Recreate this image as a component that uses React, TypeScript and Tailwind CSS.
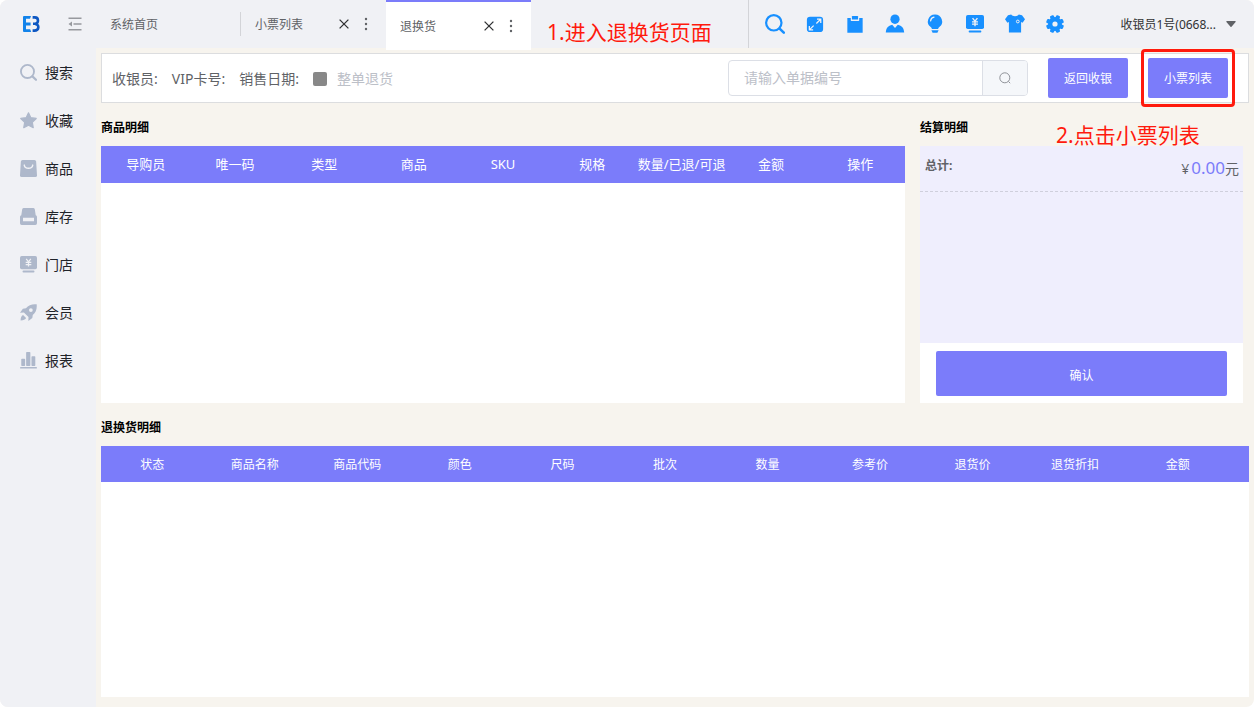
import type { ReactNode } from "react";

type IconProps = { className?: string };

function Svg({ className, children }: { className?: string; children: ReactNode }) {
  return (
    <svg viewBox="0 0 20 20" className={className} fill="currentColor" aria-hidden="true">
      {children}
    </svg>
  );
}

const SearchIcon = ({ className }: IconProps) => (
  <Svg className={className}>
    <circle cx="8.8" cy="8.8" r="7.7" fill="none" stroke="currentColor" strokeWidth="2.2" />
    <path d="M14.6 14.6 18.8 18.6" stroke="currentColor" strokeWidth="2.6" strokeLinecap="round" />
  </Svg>
);

const StarIcon = ({ className }: IconProps) => (
  <Svg className={className}>
    <path
      d="M10 1l2.8 5.7 6.3.9-4.6 4.5 1.1 6.4L10 15.6l-5.6 2.9 1.1-6.4L.9 7.6l6.3-.9z"
      stroke="currentColor"
      strokeWidth="1.4"
      strokeLinejoin="round"
    />
  </Svg>
);

const BagIcon = ({ className }: IconProps) => (
  <Svg className={className}>
    <path d="M3 0h14a2 2 0 0 1 2 1.8l1 16a2 2 0 0 1-2 2.2H2a2 2 0 0 1-2-2.2l1-16A2 2 0 0 1 3 0z" />
    <path d="M5 6c.8 5 9.2 5 10 0" fill="none" stroke="#f0f1f5" strokeWidth="1.7" strokeLinecap="round" />
  </Svg>
);

const StockIcon = ({ className }: IconProps) => (
  <Svg className={className}>
    <path
      fillRule="evenodd"
      d="M4.5 0h11a2 2 0 0 1 1.900 1.400L18.500 8.500A2 2 0 0 1 20 10.200V18a2 2 0 0 1-2 2H2a2 2 0 0 1-2-2v-7.800A2 2 0 0 1 1.500 8.500L2.600 1.400A2 2 0 0 1 4.500 0zM3.500 11.500v4h13v-4z"
    />
  </Svg>
);

const StoreIcon = ({ className }: IconProps) => (
  <Svg className={className}>
    <rect x="0" y="0" width="20" height="15.500" rx="2" />
    <rect x="3" y="17.200" width="14" height="2.200" rx=".9" />
    <path
      d="M7.300 3.400 10 6.800l2.700-3.400M10 6.800v5.600M6.700 7.600h6.600M6.700 10.200h6.600"
      fill="none"
      stroke="#f0f1f5"
      strokeWidth="1.500"
    />
  </Svg>
);

const RocketIcon = ({ className }: IconProps) => (
  <Svg className={className}>
    <path
      fillRule="evenodd"
      d="M19.600.4C14.500-.2 10 1.300 7 5L3.400 5.500 0 10.200l4.600-.2 5.400 5.400-.2 4.600 4.700-3.400.5-3.600c3.700-3 5.200-7.500 4.600-12.600zM12.800 5a2.200 2.200 0 1 1 0 4.400 2.200 2.200 0 0 1 0-4.400z"
    />
    <path d="M3.600 12.800c-2 .8-2.900 3.200-2.900 6.500 3.300 0 5.700-.9 6.500-2.900z" />
  </Svg>
);

const ChartIcon = ({ className }: IconProps) => (
  <Svg className={className}>
    <rect x="1.500" y="8" width="4.500" height="8.500" rx=".8" />
    <rect x="7.200" y="0" width="5" height="16.500" rx=".8" />
    <rect x="13.500" y="5" width="4.500" height="11.500" rx=".8" />
    <rect x="0" y="17.500" width="20" height="2" rx="1" />
  </Svg>
);

const ExpandIcon = ({ className }: IconProps) => (
  <Svg className={className}>
    <rect x="1" y="2" width="18" height="17" rx="3.500" />
    <path
      d="M11.500 9.500 16 5M12.200 4.600h4.200v4.200M8.500 11.800 4 16.200M3.700 12.300v4.200h4.200"
      fill="none"
      stroke="#f0f1f5"
      strokeWidth="1.400"
    />
  </Svg>
);

const ClipboardIcon = ({ className }: IconProps) => (
  <Svg className={className}>
    <path d="M1.500 3.300h3.800v2.500a.8.800 0 0 0 .8.800h7.800a.8.800 0 0 0 .8-.8V3.300h3.800v16.400h-17z" />
    <rect x="6.600" y="1.200" width="6.800" height="3.900" rx=".6" />
  </Svg>
);

const UserIcon = ({ className }: IconProps) => (
  <Svg className={className}>
    <ellipse cx="10" cy="5.200" rx="4.600" ry="4.800" />
    <path d="M.8 18.600c.3-4.700 2.300-7 6.400-7.900L10 14l2.800-3.300c4.100.9 6.100 3.200 6.400 7.900z" />
  </Svg>
);

const BulbIcon = ({ className }: IconProps) => (
  <Svg className={className}>
    <path d="M10 .5a7 7 0 0 1 4.300 12.600c-.8.700-1.100 1.200-1.200 1.900H6.900c-.1-.7-.4-1.200-1.200-1.900A7 7 0 0 1 10 .5z" />
    <path d="M6.400 16.300h7.200l-1.200 2.400H7.600z" />
    <path d="M5.600 6.800A4.200 4.200 0 0 1 9 3.200" fill="none" stroke="#f0f1f5" strokeWidth="1.200" strokeLinecap="round" />
  </Svg>
);

const ShirtIcon = ({ className }: IconProps) => (
  <Svg className={className}>
    <path d="M6.200.5C7.500 2.800 12.500 2.800 13.800.5L17 1.300 20 5.200l-2.400 3.600-1.500-.7v10.400H3.900V8.100l-1.500.7L0 5.200l3-3.900z" />
    <circle cx="12.800" cy="7.500" r="1.400" fill="none" stroke="#f0f1f5" strokeWidth="1" />
  </Svg>
);

const GearIcon = ({ className }: IconProps) => (
  <Svg className={className}>
    <circle cx="10" cy="10" r="7" />
    <g transform="rotate(22.5 10 10)">
      {[0, 45, 90, 135].map((angle) => (
        <rect key={angle} x="7.900" y="1" width="4.200" height="18" rx="1.200" transform={`rotate(${angle} 10 10)`} />
      ))}
    </g>
    <circle cx="10" cy="10" r="2.600" fill="#f0f1f5" />
  </Svg>
);

function Logo() {
  return (
    <svg viewBox="0 0 17 16" className="h-4 w-[17px]" aria-label="EB" role="img">
      <path d="M1 0h7L7 2.800H3V6.600h4.600v2.800H3v3.800h4.200l1 2.800H1a1 1 0 0 1-1-1V1a1 1 0 0 1 1-1z" fill="#1283ea" />
      <path
        d="M9.600 1.400h2.200c4.200 0 4.200 5.900.2 6.300h-2M12 7.900c4.800.3 4.300 6.700-.6 6.700H9.600"
        fill="none"
        stroke="#0d57c2"
        strokeWidth="2.600"
      />
    </svg>
  );
}

function FoldIcon() {
  return (
    <svg viewBox="0 0 14 14" className="h-3.5 w-3.5" fill="none" stroke="#97999e" strokeWidth="1.500" aria-hidden="true">
      <path d="M.5 1.200h13M5.500 7h8M.5 12.800h13" />
      <path d="M4 4.600.5 7 4 9.400z" fill="#97999e" stroke="none" />
    </svg>
  );
}

const menu = [
  { label: "搜索", Icon: SearchIcon },
  { label: "收藏", Icon: StarIcon },
  { label: "商品", Icon: BagIcon },
  { label: "库存", Icon: StockIcon },
  { label: "门店", Icon: StoreIcon },
  { label: "会员", Icon: RocketIcon },
  { label: "报表", Icon: ChartIcon },
];

const tools = [
  { label: "搜索", Icon: SearchIcon, size: "h-5 w-5" },
  { label: "全屏", Icon: ExpandIcon, size: "h-[18px] w-[18px]" },
  { label: "单据", Icon: ClipboardIcon, size: "h-[18px] w-[18px]" },
  { label: "用户", Icon: UserIcon, size: "h-5 w-5" },
  { label: "提示", Icon: BulbIcon, size: "h-5 w-5" },
  { label: "收银", Icon: StoreIcon, size: "h-[18px] w-[18px]" },
  { label: "服装", Icon: ShirtIcon, size: "h-5 w-5" },
  { label: "设置", Icon: GearIcon, size: "h-5 w-5" },
];

const goodsColumns = ["导购员", "唯一码", "类型", "商品", "SKU", "规格", "数量/已退/可退", "金额", "操作"];
const returnColumns = [
  "状态",
  "商品名称",
  "商品代码",
  "颜色",
  "尺码",
  "批次",
  "数量",
  "参考价",
  "退货价",
  "退货折扣",
  "金额",
];

function TabActions() {
  return (
    <div className="flex items-center gap-3">
      <button type="button" aria-label="关闭" className="text-[#303133]">
        <svg viewBox="0 0 10 10" className="h-2.5 w-2.5" stroke="currentColor" strokeWidth="1.300" aria-hidden="true">
          <path d="M.6.6l8.800 8.800M9.400.6.6 9.400" />
        </svg>
      </button>
      <button type="button" aria-label="更多" className="text-[#606266]">
        <svg viewBox="0 0 10 14" className="h-3.5 w-2.5" fill="currentColor" aria-hidden="true">
          <circle cx="5" cy="2" r="1.200" />
          <circle cx="5" cy="7" r="1.200" />
          <circle cx="5" cy="12" r="1.200" />
        </svg>
      </button>
    </div>
  );
}

function Header() {
  return (
    <header className="flex h-12 shrink-0 bg-[#f0f1f5] text-xs text-[#606266]">
      <div className="flex w-24 shrink-0 items-center gap-7 pl-[23px]">
        <Logo />
        <button type="button" aria-label="收起菜单">
          <FoldIcon />
        </button>
      </div>
      <nav className="flex shrink-0">
        <a href="#home" className="flex w-36 items-center pt-0.5 pl-3.5">
          系统首页
        </a>
        <div className="flex w-[146px] items-center">
          <span className="h-6 w-px bg-[#d3d4d8]" />
          <div className="flex flex-1 items-center justify-between pr-[15px] pl-3.5">
            <a href="#receipts" className="pt-0.5">
              小票列表
            </a>
            <TabActions />
          </div>
        </div>
        <div className="z-10 flex h-[50px] w-[145px] items-center justify-between border-t-2 border-[#7b7cfa] bg-white pr-[15px] pl-3.5">
          <a href="#returns" aria-current="page" className="pt-0.5">
            退换货
          </a>
          <TabActions />
        </div>
      </nav>
      <p className="min-w-0 flex-1 pt-4 pl-4 text-[21px] leading-8 whitespace-nowrap text-[#ff1a0d]">
        1.进入退换货页面
      </p>
      <div className="flex shrink-0 items-center border-l border-[#d3d4d8] pl-1.5 text-[#1890ff]">
        {tools.map(({ label, Icon, size }) => (
          <button key={label} type="button" aria-label={label} className="flex w-10 items-center justify-center">
            <Icon className={size} />
          </button>
        ))}
      </div>
      <button
        type="button"
        className="flex w-[179px] shrink-0 items-center justify-end gap-2.5 pr-[18px] text-[#303133]"
      >
        <span className="pt-0.5">收银员1号(0668...</span>
        <svg viewBox="0 0 10 6" className="h-1.5 w-2.5" fill="#606266" aria-hidden="true">
          <path d="M.8 0h8.400a.6.600 0 0 1 .4 1L5.500 5.700a.7.700 0 0 1-1 0L.4 1a.6.600 0 0 1 .4-1z" />
        </svg>
      </button>
    </header>
  );
}

function Toolbar() {
  return (
    <form className="flex h-[50px] items-center border border-[#dcdddf] bg-white pr-5 pl-2.5 text-sm text-[#606266]">
      <div className="flex items-center gap-3.5 pt-0.5">
        <span>收银员:</span>
        <span>VIP卡号:</span>
        <span>销售日期:</span>
        <label className="flex items-center gap-2.5 text-[#bcc0c8]">
          <input type="checkbox" disabled className="h-3.5 w-3.5 appearance-none rounded-xs bg-[#888888]" />
          整单退货
        </label>
      </div>
      <div className="ml-auto flex h-9 w-[300px] overflow-hidden rounded border border-[#dcdfe6]">
        <input
          type="text"
          aria-label="单据编号"
          placeholder="请输入单据编号"
          className="min-w-0 flex-1 px-[15px] outline-none placeholder:text-[#bcc0c8]"
        />
        <button
          type="button"
          aria-label="查询"
          className="flex w-[45px] items-center justify-center border-l border-[#dcdfe6] bg-[#f5f7fa] text-[#909399]"
        >
          <svg viewBox="0 0 14 14" className="h-3.5 w-3.5" fill="none" stroke="currentColor" aria-hidden="true">
            <circle cx="6.800" cy="6.800" r="5" />
            <path d="M10.400 10.400 12.200 12.200" />
          </svg>
        </button>
      </div>
      <button type="button" className="ml-5 h-10 w-20 rounded-xs bg-[#7b7cfa] pt-0.5 text-xs text-white">
        返回收银
      </button>
      <div className="relative ml-5">
        <button type="button" className="h-10 w-20 rounded-xs bg-[#7b7cfa] pt-0.5 text-xs text-white">
          小票列表
        </button>
        <span className="pointer-events-none absolute -inset-x-[7px] -inset-y-[9px] z-20 rounded-sm border-3 border-[#ff1a0d]" />
      </div>
    </form>
  );
}

export default function App() {
  return (
    <div className="bg-white font-['Noto_Sans','Noto_Sans_CJK_SC',sans-serif]">
      <div className="flex min-h-screen flex-col overflow-hidden rounded-lg bg-[#f7f4ee]">
        <Header />
        <div className="flex flex-1">
          <aside className="w-24 shrink-0 bg-[#f0f1f5]">
            {menu.map(({ label, Icon }) => (
              <a key={label} href={`#${label}`} className="flex h-12 items-center gap-2 pl-5 text-sm text-[#1f2329]">
                <Icon className="h-[17px] w-[17px] text-[#aeb8cb]" />
                <span className="pt-0.5">{label}</span>
              </a>
            ))}
          </aside>
          <main className="flex min-w-0 flex-1 flex-col px-[5px] pt-[5px] pb-2.5">
            <Toolbar />
            <div className="flex gap-[15px] pr-1.5">
              <section className="flex-1">
                <h2 className="pt-[17px] pb-2.5 text-xs font-bold text-black">商品明细</h2>
                <div className="h-[257px] bg-white">
                  <table className="w-full table-fixed">
                    <thead>
                      <tr className="h-[37px] bg-[#7b7cfa] text-[13px] text-white">
                        {goodsColumns.map((name) => (
                          <th key={name} className="font-normal whitespace-nowrap">
                            {name}
                          </th>
                        ))}
                      </tr>
                    </thead>
                  </table>
                </div>
              </section>
              <section className="relative w-[323px] shrink-0">
                <h2 className="pt-[17px] pb-2.5 text-xs font-bold text-black">结算明细</h2>
                <p className="absolute top-4 left-[136px] text-[21px] leading-8 whitespace-nowrap text-[#ff1a0d]">
                  2.点击小票列表
                </p>
                <div className="flex h-[257px] flex-col bg-white">
                  <div className="flex-1 bg-[#efeefd]">
                    <div className="flex h-[46px] justify-between border-b border-dashed border-[#cfcfdc] pr-1 pl-[5px] text-[#606266]">
                      <span className="pt-3 text-xs font-bold">总计:</span>
                      <span className="flex items-baseline pt-2 text-sm">
                        ¥<strong className="ml-0.5 text-[17px] leading-7 font-normal text-[#7b7cfa]">0.00</strong>元
                      </span>
                    </div>
                  </div>
                  <div className="flex h-[60px] px-4 pt-2 pb-[7px]">
                    <button type="button" className="flex-1 rounded-xs bg-[#7b7cfa] pt-1 text-xs text-white">
                      确认
                    </button>
                  </div>
                </div>
              </section>
            </div>
            <section className="flex flex-1 flex-col">
              <h2 className="pt-[17px] pb-2.5 text-xs font-bold text-black">退换货明细</h2>
              <div className="flex-1 bg-white">
                <table className="w-full table-fixed">
                  <thead>
                    <tr className="h-9 bg-[#7b7cfa] text-xs text-white">
                      {returnColumns.map((name) => (
                        <th key={name} className="pt-0.5 font-normal whitespace-nowrap">
                          {name}
                        </th>
                      ))}
                      <td className="w-5" />
                    </tr>
                  </thead>
                </table>
              </div>
            </section>
          </main>
        </div>
      </div>
    </div>
  );
}
